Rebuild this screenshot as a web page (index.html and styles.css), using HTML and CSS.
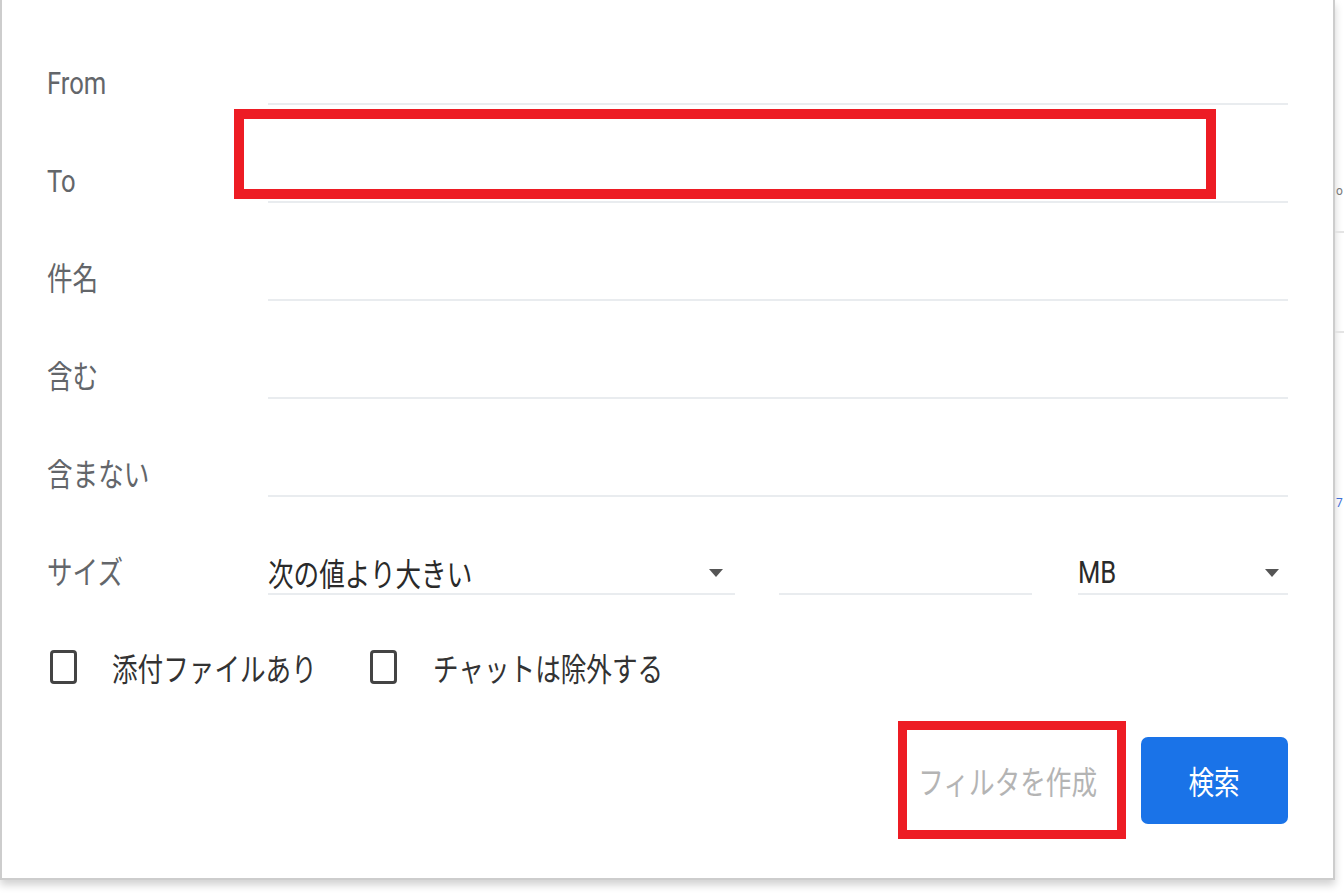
FILE: index.html
```html
<html lang="ja">
<head>
<meta charset="utf-8">
<title>検索オプション</title>
<link rel="stylesheet" href="styles.css">
</head>
<body>

<div class="dialog">

  <div class="row">
    <div class="label"><span class="sq">From</span></div>
    <div class="field"></div>
  </div>

  <div class="row">
    <div class="label"><span class="sq">To</span></div>
    <div class="field"></div>
    <div class="mark mark-to"></div>
  </div>

  <div class="row">
    <div class="label"><span class="sq">件名</span></div>
    <div class="field"></div>
  </div>

  <div class="row">
    <div class="label"><span class="sq">含む</span></div>
    <div class="field"></div>
  </div>

  <div class="row">
    <div class="label"><span class="sq">含まない</span></div>
    <div class="field"></div>
  </div>

  <div class="row size-row">
    <div class="label"><span class="sq">サイズ</span></div>
    <div class="field select sel-cmp">
      <span class="sq value">次の値より大きい</span>
      <span class="arrow"></span>
    </div>
    <div class="field num"></div>
    <div class="field select sel-unit">
      <span class="sq value">MB</span>
      <span class="arrow"></span>
    </div>
  </div>

  <div class="checks">
    <div class="check-item first">
      <span class="box"></span>
      <span class="sq">添付ファイルあり</span>
    </div>
    <div class="check-item">
      <span class="box"></span>
      <span class="sq">チャットは除外する</span>
    </div>
  </div>

  <div class="actions">
    <div class="btn-filter"><span class="sq mid">フィルタを作成</span></div>
    <div class="btn-search"><span class="sq mid">検索</span></div>
  </div>

</div>

<div class="behind">
  <div class="bg-a"><span class="peek">o</span></div>
  <div class="bg-b"></div>
  <div class="bg-c"><span class="peek blue">7</span></div>
</div>

</body>
</html>
```

FILE: styles.css
```css
body {
  margin: 0;
  width: 1344px;
  height: 896px;
  overflow: hidden;
  display: flex;
  align-items: flex-start;
  background: #fff;
  font-family: Roboto, "Noto Sans CJK JP", sans-serif;
  font-size: 32px;
}

/* screenshot is stretched vertically, so text gets squeezed */
.sq {
  display: inline-block;
  transform: scaleX(.8);
  transform-origin: 0 50%;
  white-space: nowrap;
}

.sq.mid {
  transform-origin: 50% 50%;
}

.dialog {
  box-sizing: border-box;
  flex: 0 0 1335px;
  height: 880px;
  padding: 7px 45px 0 45px;
  border: 2px solid #cdcdcd;
  border-top: none;
  box-shadow: 0 5px 8px rgba(0, 0, 0, .18);
  background: #fff;
}

.row {
  position: relative;
  display: flex;
  align-items: flex-end;
  height: 98px;
}

.label {
  flex: 0 0 221px;
  line-height: 32px;
  padding-bottom: 6px;
  color: #63666a;
}

.field {
  flex: 1;
  height: 42px;
  border-bottom: 2px solid #e9ecef;
}

.mark {
  position: absolute;
  border: 10px solid #ed1c24;
  box-sizing: border-box;
}

.mark-to {
  left: 187px;
  top: 4px;
  width: 982px;
  height: 90px;
}

.select {
  display: flex;
  align-items: center;
  justify-content: space-between;
  padding-bottom: 2px;
  box-sizing: border-box;
  color: #2a2a2a;
}

.sel-cmp {
  flex: 0 0 467px;
  margin-right: 44px;
  padding-right: 12px;
}

.num {
  flex: 0 0 253px;
  margin-right: 46px;
}

.sel-unit {
  flex: 0 0 210px;
  padding-right: 9px;
}

.arrow {
  width: 0;
  height: 0;
  border-left: 7px solid transparent;
  border-right: 7px solid transparent;
  border-top: 8px solid #555;
  margin-top: 2px;
}

.checks {
  display: flex;
  align-items: center;
  height: 34px;
  margin-top: 55px;
  padding-left: 3px;
  color: #333;
}

.check-item {
  display: flex;
  align-items: center;
  gap: 35px;
}

.check-item.first {
  flex: 0 0 320px;
}

.check-item:last-child {
  gap: 36px;
}

.box {
  box-sizing: border-box;
  width: 27px;
  height: 34px;
  border: 3px solid #444;
  border-radius: 4px;
}

.actions {
  display: flex;
  justify-content: flex-end;
  align-items: center;
  gap: 15px;
  margin-top: 37px;
}

.btn-filter {
  box-sizing: border-box;
  width: 228px;
  height: 118px;
  border: 9px solid #ed1c24;
  display: flex;
  align-items: center;
  justify-content: center;
  padding-right: 8px;
  color: #b4b4b4;
}

.btn-search {
  width: 147px;
  height: 87px;
  border-radius: 7px;
  background: #1a73e8;
  color: #fff;
  display: flex;
  align-items: center;
  justify-content: center;
}

.behind {
  flex: 1;
  height: 896px;
  overflow: hidden;
  font-size: 12px;
  color: #777;
}

.bg-a {
  height: 233px;
  border-bottom: 2px solid #e4e4e4;
  box-sizing: border-box;
  padding-top: 184px;
  padding-left: 1px;
}

.bg-b {
  height: 100px;
  border-bottom: 2px solid #e4e4e4;
  box-sizing: border-box;
}

.bg-c {
  padding-top: 163px;
  padding-left: 1px;
}

.peek {
  display: block;
  line-height: 14px;
}

.peek.blue {
  color: #3f6fd6;
}
```
